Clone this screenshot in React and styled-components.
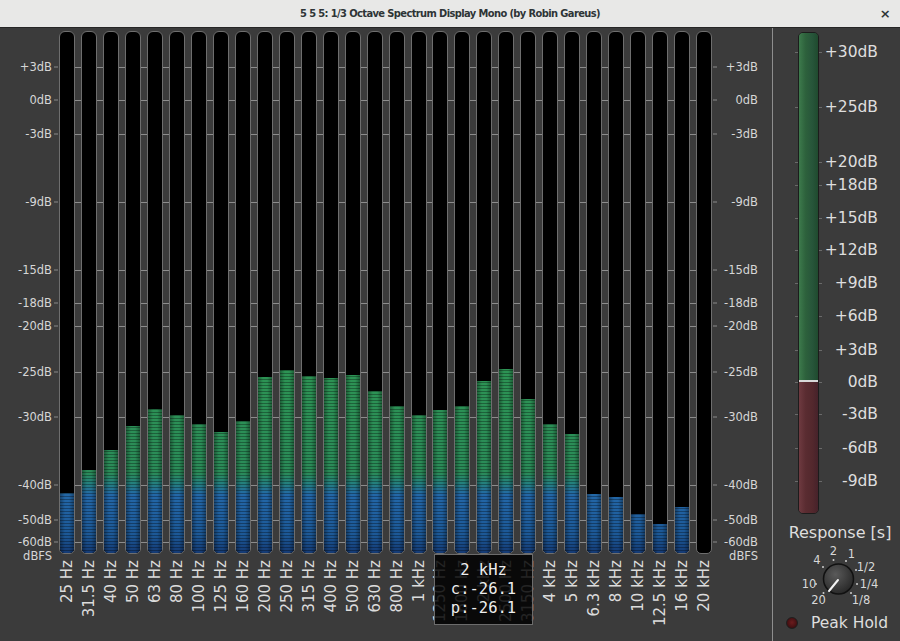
import React from 'react';
import styled, { createGlobalStyle } from 'styled-components';

const BAR_TOP = 31;
const BAR_BOTTOM = 554;
const METER_TOP = 32;

const LEFT_TICKS = [
  ['+3dB', 67], ['0dB', 100], ['-3dB', 134], ['-9dB', 202], ['-15dB', 270],
  ['-18dB', 303], ['-20dB', 326], ['-25dB', 372], ['-30dB', 417], ['-40dB', 485],
  ['-50dB', 520], ['-60dB', 542],
];

const BANDS = [
  ['25 Hz', 493], ['31.5 Hz', 470], ['40 Hz', 450], ['50 Hz', 426], ['63 Hz', 409],
  ['80 Hz', 415], ['100 Hz', 424], ['125 Hz', 432], ['160 Hz', 421], ['200 Hz', 377],
  ['250 Hz', 370], ['315 Hz', 376], ['400 Hz', 378], ['500 Hz', 375], ['630 Hz', 391],
  ['800 Hz', 406], ['1 kHz', 415], ['1250 Hz', 410], ['1600 Hz', 406], ['2 kHz', 381],
  ['2500 Hz', 369], ['3150 Hz', 399], ['4 kHz', 424], ['5 kHz', 434], ['6.3 kHz', 494],
  ['8 kHz', 497], ['10 kHz', 514], ['12.5 kHz', 524], ['16 kHz', 507], ['20 kHz', null],
];

const METER_TICKS = [
  ['+30dB', 52], ['+25dB', 107], ['+20dB', 162], ['+18dB', 185], ['+15dB', 218],
  ['+12dB', 250], ['+9dB', 283], ['+6dB', 316], ['+3dB', 350], ['0dB', 382],
  ['-3dB', 414], ['-6dB', 448], ['-9dB', 481],
];

const tickBg = (ys, color) =>
  ys.map((y) => `linear-gradient(${color}, ${color}) 0 ${y}px / 100% 1px no-repeat`).join(', ');

const Global = createGlobalStyle`
  html, body { margin: 0; padding: 0; background: #3b3b3b; }
  body { font-family: "DejaVu Sans", sans-serif; }
`;

const Window = styled.div`
  width: 900px;
  height: 641px;
  display: flex;
  flex-direction: column;
  background: #3b3b3b;
  overflow: hidden;
`;

const TitleBar = styled.div`
  flex: none;
  height: 27px;
  display: grid;
  grid-template-columns: 1fr auto 1fr;
  align-items: center;
  background: #e8e8e7;
  border-bottom: 1px solid #262626;
  color: #2e3436;
  font-family: "DejaVu Sans Condensed", "Liberation Sans Narrow", sans-serif;
  font-size: 11px;
  font-weight: bold;
  letter-spacing: -0.6px;
`;

const Title = styled.div`
  grid-column: 2;
`;

const Close = styled.div`
  grid-column: 3;
  justify-self: end;
  margin-right: 10px;
  font-family: "DejaVu Sans", sans-serif;
  font-size: 13px;
  font-weight: bold;
  color: #2e3436;
`;

const Main = styled.div`
  flex: 1;
  display: flex;
`;

const Scale = styled.div`
  flex: none;
  position: relative;
  width: ${(p) => p.$w}px;
  height: ${BAR_BOTTOM - BAR_TOP}px;
  margin-top: ${BAR_TOP - 28}px;
`;

const ScaleLabel = styled.div`
  position: absolute;
  left: ${(p) => (p.$side === 'left' ? '0' : '1px')};
  right: ${(p) => (p.$side === 'left' ? '1px' : '14px')};
  transform: translateY(-50%);
  display: flex;
  align-items: center;
  justify-content: ${(p) => (p.$side === 'left' ? 'flex-end' : 'space-between')};
  flex-direction: ${(p) => (p.$side === 'left' ? 'row' : 'row-reverse')};
  gap: 2px;
  font-size: 11.5px;
  line-height: 13px;
  color: #d6d6d6;
  white-space: nowrap;
`;

const Dash = styled.span`
  width: 4px;
  height: 1px;
  background: ${(p) => (p.$hidden ? 'transparent' : '#8a8a8a')};
`;

const Spectrum = styled.div`
  flex: none;
  width: 653px;
  position: relative;
  padding-top: ${BAR_TOP - 28}px;
  display: flex;
  flex-direction: column;
`;

const BarsRow = styled.div`
  height: ${BAR_BOTTOM - BAR_TOP}px;
  display: grid;
  grid-template-columns: repeat(30, 16px);
  column-gap: 5.97px;
  background: ${tickBg(LEFT_TICKS.map(([, y]) => y - BAR_TOP), '#8c8c8c')};
`;

const Bar = styled.div`
  box-sizing: border-box;
  height: 100%;
  border: 1px solid #6e6e6e;
  border-radius: 6px 6px 5px 5px;
  background: #000;
  display: flex;
  flex-direction: column;
  justify-content: flex-end;
  overflow: hidden;
`;

const Fill = styled.div`
  border-radius: 0 0 4px 4px;
  background:
    repeating-linear-gradient(to top, rgba(0,0,0,0) 0 2px, rgba(0,0,0,0.32) 2px 3px),
    linear-gradient(to right, rgba(0,0,0,0.35), rgba(0,0,0,0) 35%, rgba(0,0,0,0) 65%, rgba(0,0,0,0.35)),
    linear-gradient(to top, #143a74 0, #1c5896 18px, #2367a8 58px, #24807c 70px, #2a8b58 80px, #2d9553 200px, #33a055 100%) bottom / 100% 521px no-repeat;
`;

const LabelsRow = styled.div`
  display: grid;
  grid-template-columns: repeat(30, 16px);
  column-gap: 5.97px;
  padding-top: 6px;
  align-items: start;
`;

const FreqLabel = styled.div`
  justify-self: center;
  writing-mode: vertical-rl;
  transform: rotate(180deg);
  font-size: 15px;
  line-height: 16px;
  color: #dcdcdc;
  white-space: nowrap;
`;

const Tooltip = styled.div`
  position: absolute;
  left: 375px;
  top: 526px;
  box-sizing: border-box;
  width: 99px;
  height: 71px;
  background: rgba(0, 0, 0, 0.84);
  border: 1px solid #6c6c6c;
  display: flex;
  flex-direction: column;
  align-items: center;
  justify-content: center;
  font-family: "DejaVu Sans Mono", monospace;
  font-size: 15.5px;
  line-height: 19px;
  color: #eeeeee;
  white-space: pre;
`;

const Divider = styled.div`
  flex: none;
  width: 1px;
  background: #8e8e8e;
`;

const RightPanel = styled.div`
  flex: 1;
  display: flex;
  flex-direction: column;
  padding-top: ${METER_TOP - 28}px;
`;

const MeterRow = styled.div`
  display: flex;
  height: 482px;
  padding-left: 22px;
`;

const MeterTrack = styled.div`
  flex: none;
  width: 27px;
  padding: 0 3px;
  box-sizing: border-box;
  background: ${tickBg(METER_TICKS.map(([, y]) => y - METER_TOP), '#6a6a6a')};
`;

const Meter = styled.div`
  box-sizing: border-box;
  height: 100%;
  border: 1px solid #1c1c1c;
  border-radius: 5px;
  overflow: hidden;
  display: flex;
  flex-direction: column;
`;

const MeterGreen = styled.div`
  flex: 1;
  background: linear-gradient(to right, #3d7a4c, #2d613c 35%, #27553a 70%, #1f4a2e);
`;

const ZeroLine = styled.div`
  height: 2px;
  background: #d8d8d8;
`;

const MeterRed = styled.div`
  height: 131px;
  background: linear-gradient(to right, #6e3a40, #5a2c31 35%, #53282d 70%, #46222a);
`;

const MeterScale = styled.div`
  flex: 1;
  position: relative;
`;

const MeterLabel = styled.div`
  position: absolute;
  right: 22px;
  transform: translateY(-50%);
  font-size: 15.5px;
  line-height: 18px;
  color: #dedede;
  white-space: nowrap;
`;

const Response = styled.div`
  margin-top: 10px;
  padding-left: 7px;
  text-align: center;
  font-size: 16px;
  line-height: 18px;
  color: #dedede;
`;

const KnobSvg = styled.svg`
  display: block;
  margin: 1px auto 0;
`;

const PeakRow = styled.div`
  margin-top: 5px;
  padding-left: 13px;
  display: flex;
  align-items: center;
  gap: 13px;
  height: 20px;
`;

const Led = styled.div`
  width: 12px;
  height: 12px;
  box-sizing: border-box;
  border-radius: 50%;
  border: 1px solid #1f1f1f;
  background: radial-gradient(circle at 50% 45%, #6b1c1e 0, #4a1214 55%, #2a0b0c 100%);
`;

const PeakText = styled.span`
  font-size: 15.5px;
  color: #dedede;
`;

const KNOB_LABELS = [
  ['4', 30, 17], ['2', 46.5, 8], ['1', 64.5, 11], ['1/2', 79, 24],
  ['10', 22, 41], ['1/4', 82, 41], ['20', 31.5, 57], ['1/8', 74, 57],
];
const KNOB_DOTS = [
  [36, 24], [46.5, 17], [59, 18], [69, 27], [29, 41], [70, 41], [36.5, 50], [64, 50],
];

function Knob() {
  return (
    <KnobSvg width="100" height="65" viewBox="0 0 100 65">
      <defs>
        <radialGradient id="kg" cx="40%" cy="35%" r="70%">
          <stop offset="0" stopColor="#5a5a5a" />
          <stop offset="1" stopColor="#262626" />
        </radialGradient>
      </defs>
      {KNOB_DOTS.map(([x, y], i) => (
        <circle key={i} cx={x} cy={y} r="1" fill="#cfcfcf" />
      ))}
      {KNOB_LABELS.map(([t, x, y]) => (
        <text
          key={t}
          x={x}
          y={y}
          textAnchor="middle"
          dominantBaseline="central"
          fontFamily="DejaVu Sans, sans-serif"
          fontSize="11.5"
          fill="#d8d8d8"
        >
          {t}
        </text>
      ))}
      <circle cx="51.5" cy="36" r="15" fill="url(#kg)" stroke="#111" strokeWidth="1.5" />
      <line x1="51" y1="37" x2="42" y2="48" stroke="#f2f2f2" strokeWidth="2" strokeLinecap="round" />
    </KnobSvg>
  );
}

function ScaleColumn({ side, width }) {
  return (
    <Scale $w={width}>
      {LEFT_TICKS.map(([t, y]) => (
        <ScaleLabel key={t} $side={side} style={{ top: y - BAR_TOP }}>
          <span>{t}</span>
          <Dash />
        </ScaleLabel>
      ))}
      <ScaleLabel $side={side} style={{ top: 556 - BAR_TOP }}>
        <span>dBFS</span>
        <Dash $hidden />
      </ScaleLabel>
    </Scale>
  );
}

export default function App() {
  return (
    <>
      <Global />
      <Window>
        <TitleBar>
          <Title>5 5 5: 1/3 Octave Spectrum Display Mono (by Robin Gareus)</Title>
          <Close>×</Close>
        </TitleBar>
        <Main>
          <ScaleColumn side="left" width={59} />
          <Spectrum>
            <BarsRow>
              {BANDS.map(([f, top]) => (
                <Bar key={f}>
                  {top !== null && <Fill style={{ height: BAR_BOTTOM - 1 - top }} />}
                </Bar>
              ))}
            </BarsRow>
            <LabelsRow>
              {BANDS.map(([f]) => (
                <FreqLabel key={f}>{f}</FreqLabel>
              ))}
            </LabelsRow>
            <Tooltip>{' 2 kHz\nc:-26.1\np:-26.1'}</Tooltip>
          </Spectrum>
          <ScaleColumn side="right" width={60} />
          <Divider />
          <RightPanel>
            <MeterRow>
              <MeterTrack>
                <Meter>
                  <MeterGreen />
                  <ZeroLine />
                  <MeterRed />
                </Meter>
              </MeterTrack>
              <MeterScale>
                {METER_TICKS.map(([t, y]) => (
                  <MeterLabel key={t} style={{ top: y - METER_TOP }}>{t}</MeterLabel>
                ))}
              </MeterScale>
            </MeterRow>
            <Response>Response [s]</Response>
            <Knob />
            <PeakRow>
              <Led />
              <PeakText>Peak Hold</PeakText>
            </PeakRow>
          </RightPanel>
        </Main>
      </Window>
    </>
  );
}
